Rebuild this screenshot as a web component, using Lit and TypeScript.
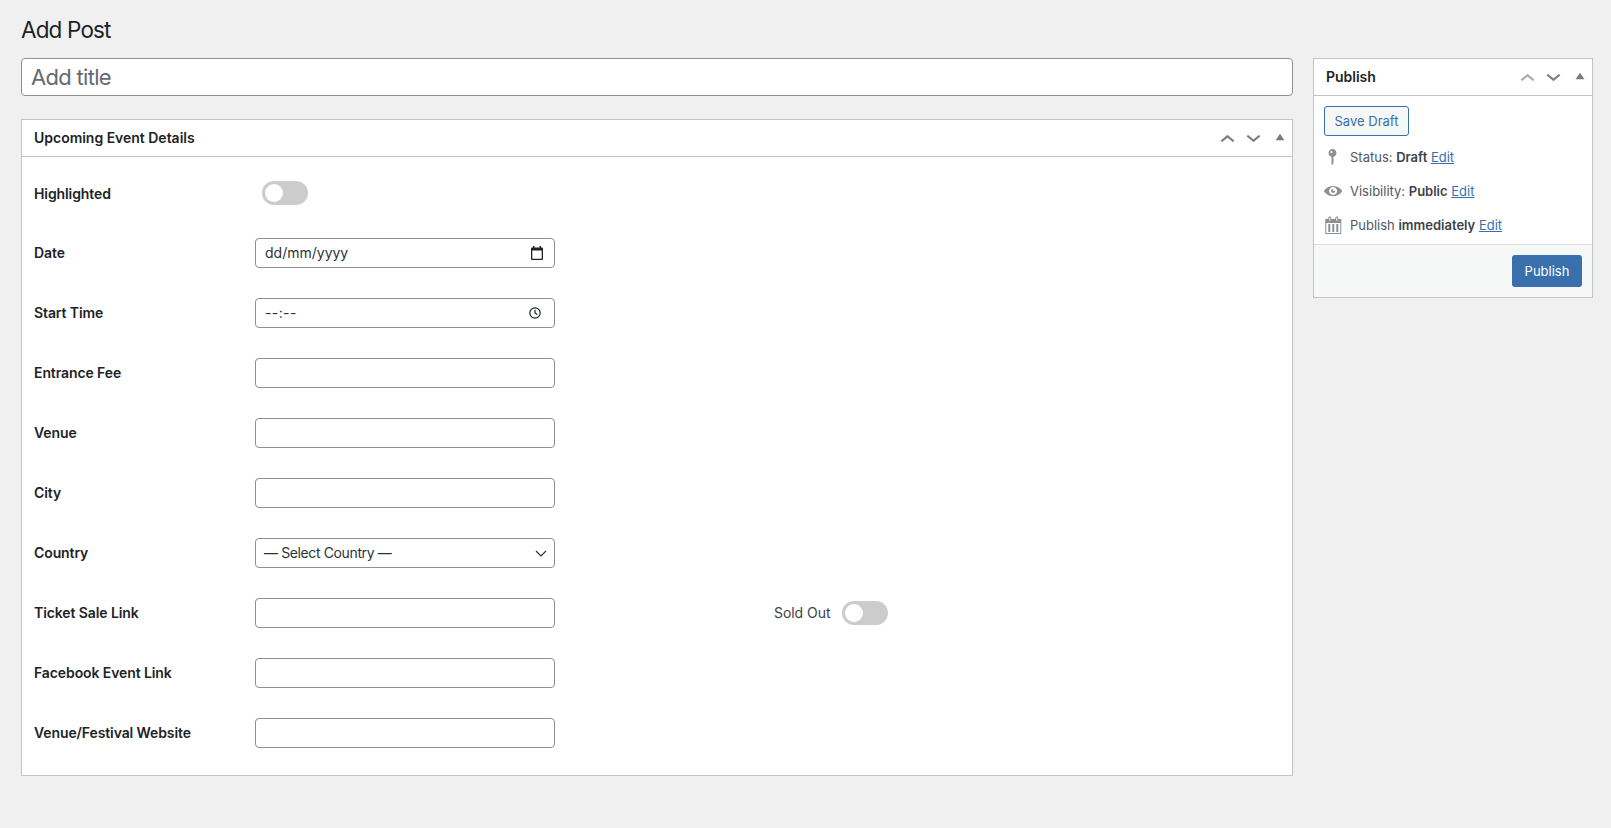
import { LitElement, html, css, svg } from "lit";
import { customElement } from "lit/decorators.js";

const chevUp = svg`<path d="M6.5 12.4L12 8l5.5 4.4-.9 1.2L12 10l-4.5 3.6-1-1.2z"/>`;
const chevDown = svg`<path d="M17.5 11.600L12 16l-5.500-4.400.9-1.200L12 14l4.500-3.600 1 1.200z"/>`;

const rows = [
  { label: "Date", kind: "date" },
  { label: "Start Time", kind: "time" },
  { label: "Entrance Fee", kind: "text" },
  { label: "Venue", kind: "text" },
  { label: "City", kind: "text" },
  { label: "Country", kind: "select" },
  { label: "Ticket Sale Link", kind: "text", soldOut: true },
  { label: "Facebook Event Link", kind: "text" },
  { label: "Venue/Festival Website", kind: "text" },
];

@customElement("app-root")
export class AppRoot extends LitElement {
  static styles = css`
    :host {
      display: block;
      min-height: 100vh;
      background: #f0f0f1;
      font-family: Inter, "Liberation Sans", sans-serif;
      font-size: 13px;
      color: #1d2327;
      box-sizing: border-box;
      padding: 15px 18px 0 21px;
    }
    * { box-sizing: border-box; }
    h1 {
      margin: 0 0 13px;
      font-size: 22.5px;
      font-weight: 400;
      line-height: 30px;
      letter-spacing: -0.85px;
      color: #1d2327;
    }
    .cols {
      display: grid;
      grid-template-columns: minmax(0, 1fr) 280px;
      column-gap: 20px;
      align-items: start;
    }
    .title {
      display: block;
      width: 100%;
      height: 38px;
      margin: 0 0 23px;
      padding: 0 9px;
      border: 1px solid #8c8f94;
      border-radius: 4px;
      background: #fff;
      font: 400 22px Inter, "Liberation Sans", sans-serif;
      letter-spacing: -0.7px;
      outline: none;
    }
    .title::placeholder { color: #646970; opacity: 1; }
    .panel {
      background: #fff;
      border: 1px solid #c3c4c7;
    }
    .head {
      display: flex;
      align-items: center;
      height: 37px;
      padding-left: 12px;
      border-bottom: 1px solid #c3c4c7;
    }
    .head h2 {
      flex: 1;
      margin: -2px 0 0;
      font-size: 14px;
      font-weight: 600;
      letter-spacing: -0.02px;
      color: #1d2327;
    }
    .act {
      flex: none;
      width: 26px;
      height: 26px;
      display: flex;
      align-items: center;
      justify-content: center;
      fill: #787c82;
    }
    .act.off { fill: #a7aaad; }
    .act svg.chev {
      display: block;
      flex: none;
      width: 29px;
      height: 29px;
    }
    .act svg.chev path { stroke: #787c82; stroke-width: 0.25; }
    .act.off svg.chev path { stroke: #a7aaad; }
    .act .tri { display: block; width: 22px; height: 22px; margin: -2px 0 0 1px; }
    .inside { padding: 6px 12px 12px; }
    .row {
      display: flex;
      align-items: center;
      height: 60px;
    }
    .lab {
      flex: none;
      width: 221px;
      margin-top: -2px;
      font-size: 14px;
      font-weight: 600;
      letter-spacing: -0.1px;
      color: #1d2327;
    }
    .row.top .lab { margin-top: 0; }
    .ctl {
      flex: none;
      display: flex;
      align-items: center;
      justify-content: space-between;
      width: 300px;
      height: 30px;
      padding: 0 9px 1px;
      border: 1px solid #8c8f94;
      border-radius: 4px;
      background: #fff;
      font: 400 14px Inter, "Liberation Sans", sans-serif;
      color: #2c3338;
    }
    input.ctl { outline: none; }
    .ctl.sel { padding: 0 8px 1px; letter-spacing: -0.38px; }
    .ctl.tm span { letter-spacing: 0.4px; }
    .ctl svg { display: block; flex: none; }
    .cal { width: 14px; height: 14px; margin-right: 1px; }
    .clk { width: 14px; height: 14px; margin-right: 3px; }
    .sv { width: 14px; height: 14px; margin-right: -2px; }
    .toggle {
      flex: none;
      position: relative;
      width: 46px;
      height: 24px;
      border-radius: 12px;
      background: #ccc;
    }
    .toggle::after {
      content: "";
      position: absolute;
      left: 3px;
      top: 3px;
      width: 18px;
      height: 18px;
      border-radius: 50%;
      background: #fff;
    }
    .row.top .toggle { margin: -1px 0 0 7px; }
    .sold {
      display: flex;
      align-items: center;
      gap: 12px;
      margin-left: 219px;
      color: #3c434a;
      font-size: 14px;
      letter-spacing: -0.05px;
    }
    .sold span:first-child { margin-top: -1px; }
    .pub-body { padding: 10px 10px 2px; }
    .btn2 {
      display: inline-flex;
      align-items: center;
      justify-content: center;
      width: 85px;
      height: 30px;
      margin-bottom: 4px;
      border: 1px solid #386fac;
      border-radius: 3px;
      background: #f6f7f7;
      color: #386fac;
    }
    .meta {
      display: flex;
      align-items: center;
      gap: 6px;
      height: 34px;
      color: #50575e;
    }
    .meta svg { flex: none; width: 20px; height: 20px; fill: #8c8f94; }
    .meta b { font-weight: 600; color: #3c434a; }
    .meta a { color: #386fac; text-decoration: underline; }
    .foot {
      display: flex;
      justify-content: flex-end;
      padding: 10px;
      height: 53px;
      border-top: 1px solid #dcdcde;
      background: #f6f7f7;
    }
    .btn1 {
      display: flex;
      align-items: center;
      justify-content: center;
      width: 70px;
      height: 32px;
      border-radius: 3px;
      background: #386fac;
      color: #fff;
    }
  `;

  private actions(upOff = false) {
    return html`
      <span class="act ${upOff ? "off" : ""}"><svg class="chev" viewBox="0 -1.200 24 24">${chevUp}</svg></span>
      <span class="act"><svg class="chev" viewBox="0 1.200 24 24">${chevDown}</svg></span>
      <span class="act"><svg class="tri" viewBox="0 0 20 20"><path d="M10 7l4 6H6z"/></svg></span>
    `;
  }

  private control(kind: string) {
    if (kind === "date")
      return html`<div class="ctl"><span>dd/mm/yyyy</span>
        <svg class="cal" viewBox="0 0 14 14"><path fill="#1d2327" d="M3 0h1.500v1.500h5V0H11v1.500h1a1 1 0 0 1 1 1V13a1 1 0 0 1-1 1H2a1 1 0 0 1-1-1V2.500a1 1 0 0 1 1-1h1zM2.300 4.500v8.200h9.400V4.500z"/></svg></div>`;
    if (kind === "time")
      return html`<div class="ctl tm"><span>--:--</span>
        <svg class="clk" viewBox="0 0 14 14" fill="none" stroke="#1d2327" stroke-width="1.200"><circle cx="7" cy="7" r="5.200"/><path d="M7 3.800V7l2.300 1.500"/></svg></div>`;
    if (kind === "select")
      return html`<div class="ctl sel"><span>— Select Country —</span>
        <svg class="sv" viewBox="0 0 14 14" fill="none" stroke="#2c3338" stroke-width="1.200"><path d="M2 5l5 5 5-5"/></svg></div>`;
    return html`<input class="ctl" type="text" />`;
  }

  render() {
    return html`
      <h1>Add Post</h1>
      <div class="cols">
        <div>
          <input class="title" type="text" placeholder="Add title" />
          <section class="panel">
            <div class="head"><h2>Upcoming Event Details</h2>${this.actions()}</div>
            <div class="inside">
              <div class="row top"><span class="lab">Highlighted</span><span class="toggle"></span></div>
              ${rows.map(
                (r) => html`<div class="row">
                  <span class="lab">${r.label}</span>
                  ${this.control(r.kind)}
                  ${r.soldOut
                    ? html`<div class="sold"><span>Sold Out</span><span class="toggle"></span></div>`
                    : ""}
                </div>`
              )}
            </div>
          </section>
        </div>
        <aside class="panel">
          <div class="head"><h2>Publish</h2>${this.actions(true)}</div>
          <div class="pub-body">
            <div class="btn2">Save Draft</div>
            <div class="meta">
              <svg viewBox="1.500 0 20 20"><path d="M14 6c0 1.860-1.280 3.410-3 3.860V16c0 1-2 2-2 2V9.860c-1.720-.45-3-2-3-3.860 0-2.210 1.790-4 4-4s4 1.790 4 4zM8 5c0 .55.45 1 1 1s1-.45 1-1-.45-1-1-1-1 .45-1 1z"/></svg>
              <span>Status: <b>Draft</b> <a>Edit</a></span>
            </div>
            <div class="meta">
              <svg viewBox="0 -1 22 22"><path d="M10 4.400C3.439 4.400 0 9.232 0 10c0 .766 3.439 5.600 10 5.600 6.560 0 10-4.834 10-5.600 0-.768-3.440-5.600-10-5.600zm0 9.907c-2.455 0-4.445-1.928-4.445-4.307S7.545 5.691 10 5.691s4.444 1.930 4.444 4.309-1.989 4.307-4.444 4.307zM10 10c-.407-.447.663-2.154 0-2.154-1.228 0-2.223.965-2.223 2.154s.995 2.154 2.223 2.154c1.227 0 2.223-.965 2.223-2.154 0-.547-1.877.379-2.223 0z"/></svg>
              <span>Visibility: <b>Public</b> <a>Edit</a></span>
            </div>
            <div class="meta">
              <svg viewBox="0.700 0 20 20"><path d="M15 4h3v15H2V4h3V3c0-.41.15-.76.44-1.060.29-.29.65-.44 1.060-.44s.77.15 1.060.44c.29.3.44.65.44 1.060v1h4V3c0-.41.15-.76.44-1.060.29-.29.65-.44 1.060-.44s.77.15 1.060.44c.29.3.44.65.44 1.060v1zM6 3v2.500c0 .14.05.26.15.36.09.09.21.14.35.14s.26-.05.35-.14c.1-.1.15-.22.15-.36V3c0-.14-.05-.26-.15-.35-.09-.1-.21-.15-.35-.15s-.26.05-.35.15c-.1.09-.15.21-.15.35zm7 0v2.500c0 .14.05.26.14.36.1.09.22.14.36.14s.26-.05.36-.14c.09-.1.14-.22.14-.36V3c0-.14-.05-.26-.14-.35-.1-.1-.22-.15-.36-.15s-.26.05-.36.15c-.09.09-.14.21-.14.35zm4 15V8H3v10h14zM7 9v8H5V9h2zm4 0v8H9V9h2zm4 0v8h-2V9h2z"/></svg>
              <span>Publish <b>immediately</b> <a>Edit</a></span>
            </div>
          </div>
          <div class="foot"><div class="btn1">Publish</div></div>
        </aside>
      </div>
    `;
  }
}
